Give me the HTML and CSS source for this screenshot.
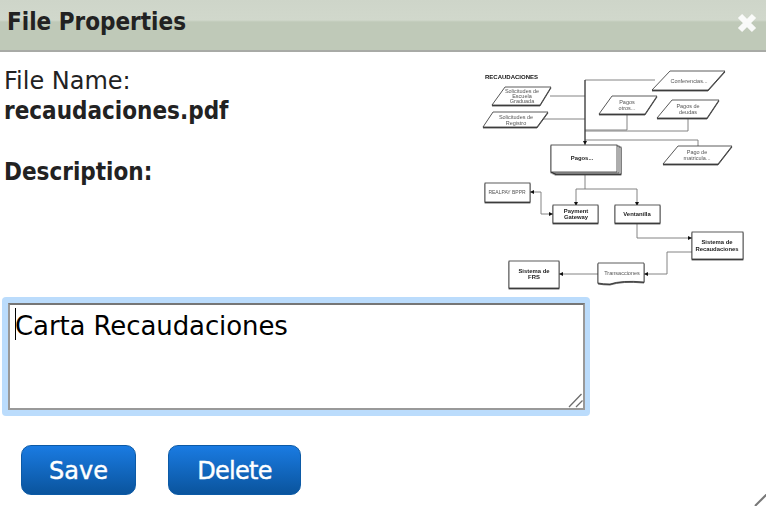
FILE: index.html
```html
<!DOCTYPE html>
<html lang="en">
<head>
    <meta charset="UTF-8">
    <title>File Properties</title>
    <link rel="stylesheet" href="styles.css">
</head>
<body>
    <div class="dialog">
        <!-- Title bar -->
        <div class="dialog-header">
            <h1 class="dialog-title">File Properties</h1>
            <svg class="close-icon" width="20" height="20" viewBox="0 0 20 20">
                <path d="M3 3 L17 17 M17 3 L3 17"></path>
            </svg>
        </div>

        <div class="dialog-top">
            <div class="file-info">
                <div>File Name:</div>
                <div class="strong">recaudaciones.pdf</div>
                <div class="strong desc-label">Description:</div>
            </div>

            <!-- Thumbnail of the pdf -->
            <svg class="thumb" width="294" height="248" viewBox="472 52 294 248">
                <g class="lines">
                    <path d="M655 80 H585 V145"></path>
                    <path d="M550 96 H585 M537 119 H585"></path>
                    <path d="M627 114 V130 H585 M688 118 V131 H585 M698 146 V140 H585"></path>
                    <path d="M585 172 V189 M576 205 V189 H637 V205"></path>
                    <path d="M530 192 H541 V214 H553"></path>
                    <path d="M637 223 V238 H692"></path>
                    <path d="M692 252 H667 V274 H644"></path>
                    <path d="M598 274 H559"></path>
                </g>
                <path class="trunk" d="M585 80 V142"></path>
                <g class="arrows">
                    <path d="M583 141 H587 L585 145 Z"></path>
                    <path d="M574 202 H578 L576 206 Z M635 202 H639 L637 206 Z"></path>
                    <path d="M534 190 V194 L530 192 Z M549 212 V216 L553 214 Z"></path>
                    <path d="M688 236 V240 L692 238 Z M648 272 V276 L644 274 Z M563 272 V276 L559 274 Z"></path>
                </g>
                <g class="shapes">
                    <polygon points="670,71 725,71 708,90 652,90"></polygon>
                    <polygon points="505,87 551,87 540,105 492,105"></polygon>
                    <polygon points="493,112 548,112 537,127 483,127"></polygon>
                    <polygon points="612,96 657,96 645,114 599,114"></polygon>
                    <polygon points="672,100 719,100 707,118 657,118"></polygon>
                    <polygon points="678,146 732,146 718,164 663,164"></polygon>
                    <rect x="555" y="147" width="66" height="27"></rect>
                    <rect x="553" y="146" width="66" height="27"></rect>
                    <rect x="551" y="145" width="66" height="27"></rect>
                    <rect x="485" y="183" width="45" height="19"></rect>
                    <rect x="553" y="205" width="45" height="18"></rect>
                    <rect x="615" y="205" width="45" height="18"></rect>
                    <rect x="692" y="232" width="51" height="27"></rect>
                    <rect x="509" y="261" width="50" height="27"></rect>
                    <path d="M598 263 H644 V282 Q622 280 610 284 Q603 284 598 283 Z"></path>
                </g>
                <text class="thumb-heading" x="485" y="79">RECAUDACIONES</text>
                <g class="thumb-text">
                    <text x="689" y="83">Conferencias...</text>
                    <text x="522" y="93">Solicitudes de</text>
                    <text x="522" y="98">Escuela</text>
                    <text x="522" y="103">Graduada</text>
                    <text x="516" y="119">Solicitudes de</text>
                    <text x="516" y="125">Registro</text>
                    <text x="627" y="104">Pagos</text>
                    <text x="627" y="110">otros...</text>
                    <text x="688" y="108">Pagos de</text>
                    <text x="688" y="114">deudas</text>
                    <text x="697" y="154">Pago de</text>
                    <text x="697" y="160">matricula...</text>
                    <text x="622" y="275">Transacciones</text>
                    <text class="thumb-small" x="507" y="194">REALPAY BPPR</text>
                </g>
                <g class="thumb-text thumb-bold">
                    <text x="582" y="160">Pagos...</text>
                    <text x="576" y="213">Payment</text>
                    <text x="576" y="218.5">Gateway</text>
                    <text x="637" y="216">Ventanilla</text>
                    <text x="717" y="244">Sistema de</text>
                    <text x="717" y="251">Recaudaciones</text>
                    <text x="534" y="273">Sistema de</text>
                    <text x="534" y="279">FRS</text>
                </g>
            </svg>
        </div>

        <div class="desc-box">
            <textarea class="desc-input">Carta Recaudaciones</textarea>
            <span class="caret"></span>
            <svg class="desc-grip" width="15" height="15" viewBox="0 0 15 15">
                <path d="M1 14 L13.5 1 M8 14 L14.5 7.5"></path>
            </svg>
        </div>

        <div class="dialog-actions">
            <button class="btn btn-save">Save</button>
            <button class="btn btn-delete">Delete</button>
        </div>

        <!-- Dialog resize grip -->
        <svg class="grip" width="12" height="12" viewBox="0 0 12 12">
            <path d="M13 0 L1 12"></path>
        </svg>
    </div>
</body>
</html>
```

FILE: styles.css
```css
* {
    margin: 0;
    padding: 0;
    box-sizing: border-box;
}

html, body {
    background-color: white;
    color: #222;
    height: 100%;
    overflow: hidden;
}

.dialog {
    position: relative;
    height: 506px;
    font-family: "DejaVu Sans", Verdana, sans-serif;
    font-size: 24px;
    line-height: 30px;
}

/* Title bar */
.dialog-header {
    display: flex;
    justify-content: space-between;
    align-items: center;
    height: 52px;
    padding: 0 9px 6px 7px;
    background: linear-gradient(#ced5c9 0, #d1d8cc 20px, #bfc9b8 22px, #bfc9b8 100%);
    border-bottom: 2px solid #a8aaa6;
}

.dialog-title {
    font-size: 24px;
    font-weight: bold;
    font-stretch: condensed;
}

.close-icon {
    margin-top: 2px;
    fill: none;
    stroke: #fff;
    stroke-width: 6;
    opacity: 0.9;
    filter: blur(0.5px);
}

/* Top part: file info and thumbnail */
.dialog-top {
    display: flex;
    justify-content: space-between;
    height: 248px;
}

.file-info {
    padding: 14px 0 0 4px;
}

.strong {
    font-weight: bold;
    font-stretch: condensed;
}

.desc-label {
    margin-top: 31px;
}

.thumb {
    position: relative;
    background-color: white;
    flex-shrink: 0;
    filter: blur(0.6px);
}

.lines {
    fill: none;
    stroke: #777;
    stroke-width: 0.9;
}

.trunk {
    fill: none;
    stroke: #222;
    stroke-width: 0.9;
}

.arrows {
    fill: #111;
}

.shapes {
    fill: white;
    stroke: #333;
    stroke-width: 0.8;
    filter: drop-shadow(0 1px 0.7px #444);
}

.thumb-heading {
    font-family: "Liberation Sans", sans-serif;
    font-size: 6px;
    font-weight: bold;
    fill: #111;
}

.thumb-text {
    font-family: "Liberation Sans", sans-serif;
    font-size: 5.5px;
    text-anchor: middle;
    fill: #555;
}

.thumb-small {
    font-size: 5px;
}

.thumb-bold {
    font-size: 5.9px;
    font-weight: bold;
    fill: #222;
}

/* Description */
.desc-box {
    position: relative;
    margin: -3px 0 0 2px;
    width: 588px;
    height: 119px;
    padding: 6px 5px 6px 6px;
    border-radius: 4px;
    background-color: #bbdcfc;
}

.desc-input {
    display: block;
    width: 100%;
    height: 100%;
    padding: 3px 5px;
    border: 2px solid #999;
    border-top-color: #767676;
    border-radius: 0;
    outline: none;
    resize: none;
    font-family: "DejaVu Sans", Verdana, sans-serif;
    font-size: 26px;
    line-height: 36px;
    letter-spacing: -0.1px;
    color: #000;
}

.caret {
    position: absolute;
    top: 11px;
    left: 13px;
    width: 1px;
    height: 32px;
    background-color: #000;
}

.desc-grip {
    position: absolute;
    right: 7px;
    bottom: 8px;
    fill: none;
    stroke: #6d6d6d;
    stroke-width: 1.3;
}

/* Buttons */
.dialog-actions {
    display: flex;
    gap: 32px;
    padding: 29px 0 0 21px;
}

.btn {
    height: 50px;
    padding-top: 2px;
    border: 1px solid #0c5aa6;
    border-radius: 10px;
    background: linear-gradient(#1a7be2, #0a549d);
    color: white;
    font-family: "DejaVu Sans", Verdana, sans-serif;
    font-size: 24px;
    -webkit-text-stroke: 0.4px white;
}

.btn-save {
    width: 115px;
}

.btn-delete {
    width: 133px;
    letter-spacing: -0.7px;
}

.grip {
    position: absolute;
    right: 0;
    bottom: 0;
    fill: none;
    stroke: #777;
    stroke-width: 2;
}
```
